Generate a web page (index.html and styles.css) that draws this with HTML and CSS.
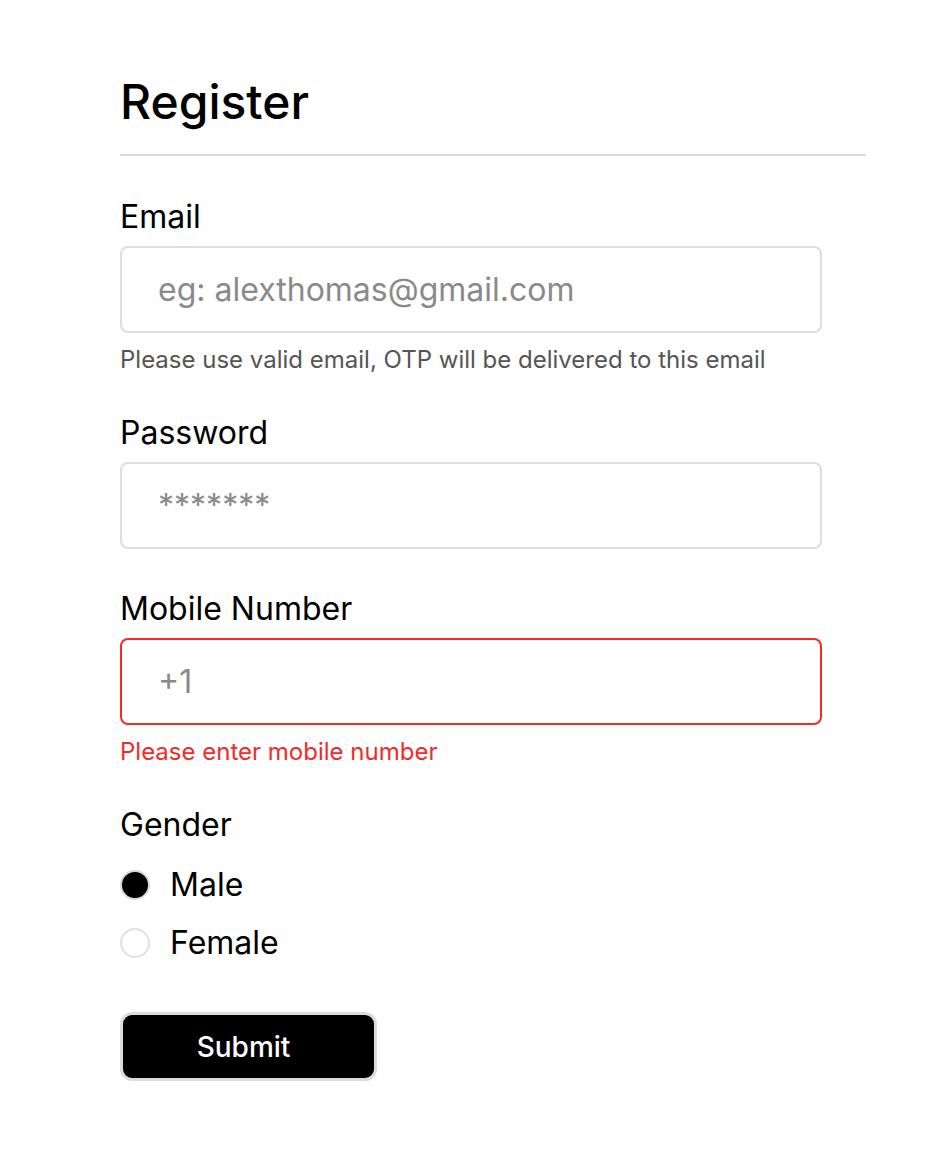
FILE: index.html
```html
<!DOCTYPE html>
<html lang="en">
<head>
<meta charset="utf-8">
<title>Register</title>
<link rel="stylesheet" href="styles.css">
</head>
<body>
<main class="page">
  <header class="header">
    <h1 class="title">Register</h1>
  </header>
  <form class="form">
    <div class="field has-msg">
      <label class="label" for="email">Email</label>
      <input class="input" id="email" type="text" placeholder="eg: alexthomas@gmail.com">
      <p class="msg">Please use valid email, OTP will be delivered to this email</p>
    </div>
    <div class="field">
      <label class="label" for="pw">Password</label>
      <input class="input" id="pw" type="text" placeholder="*******">
    </div>
    <div class="field has-msg">
      <label class="label" for="mobile">Mobile Number</label>
      <input class="input input-error" id="mobile" type="text" placeholder="+1">
      <p class="msg msg-error">Please enter mobile number</p>
    </div>
    <div class="field gender">
      <span class="label">Gender</span>
      <div class="radios">
        <label class="radio-row"><input class="radio" type="radio" name="g" checked><span>Male</span></label>
        <label class="radio-row"><input class="radio" type="radio" name="g"><span>Female</span></label>
      </div>
    </div>
    <button class="submit" type="button">Submit</button>
  </form>
</main>
</body>
</html>
```

FILE: styles.css
```css
* { box-sizing: border-box; }
html, body { margin: 0; padding: 0; background: #fff; }
body {
  font-family: "Inter", "Liberation Sans", sans-serif;
  color: #000;
}
.page {
  width: 746px;
  margin-left: 120px;
  padding-top: 74px;
}
.header {
  border-bottom: 2px solid #dcdcdc;
  padding-bottom: 24px;
}
.title {
  margin: 0;
  font-size: 48px;
  line-height: 56px;
  font-weight: 500;
}
.form {
  display: flex;
  flex-direction: column;
  padding-top: 43px;
}
.field {
  display: flex;
  flex-direction: column;
  margin-bottom: 42px;
}
.field.has-msg { margin-bottom: 40px; }
.label {
  font-size: 32px;
  line-height: 36px;
  font-weight: 400;
  margin-bottom: 11px;
}
.input {
  width: 702px;
  height: 87px;
  border: 2px solid #dedede;
  border-radius: 8px;
  padding: 0 0 0 36px;
  font-family: inherit;
  font-size: 32px;
  color: #000;
  outline: none;
  background: #fff;
}
.input::placeholder { color: #8a8a8a; }
.input-error { border-color: #f22a2a; }
.msg {
  margin: 12px 0 0;
  font-size: 24px;
  line-height: 30px;
  color: #555;
}
.msg-error { color: #f22a2a; }
.gender .label { margin-bottom: 24px; }
.gender { margin-bottom: 51px; }
.radios {
  display: flex;
  flex-direction: column;
  gap: 22px;
}
.radio-row {
  display: flex;
  align-items: center;
  gap: 20px;
  height: 36px;
  font-size: 32px;
  line-height: 36px;
}
.radio {
  appearance: none;
  -webkit-appearance: none;
  margin: 0;
  width: 30px;
  height: 30px;
  border-radius: 50%;
  border: 2px solid #e0e0e0;
  background: #fff;
}
.radio:checked {
  background: #000;
  border-color: #d8d8d8;
  box-shadow: inset 0 0 0 1px #000;
}
.submit {
  align-self: flex-start;
  width: 257px;
  height: 69px;
  background: #000;
  color: #fff;
  border: 3px solid #dcdcdc;
  border-radius: 12px;
  font-family: inherit;
  font-size: 28px;
  font-weight: 500;
  padding: 0 10px 0 0;
}
```
